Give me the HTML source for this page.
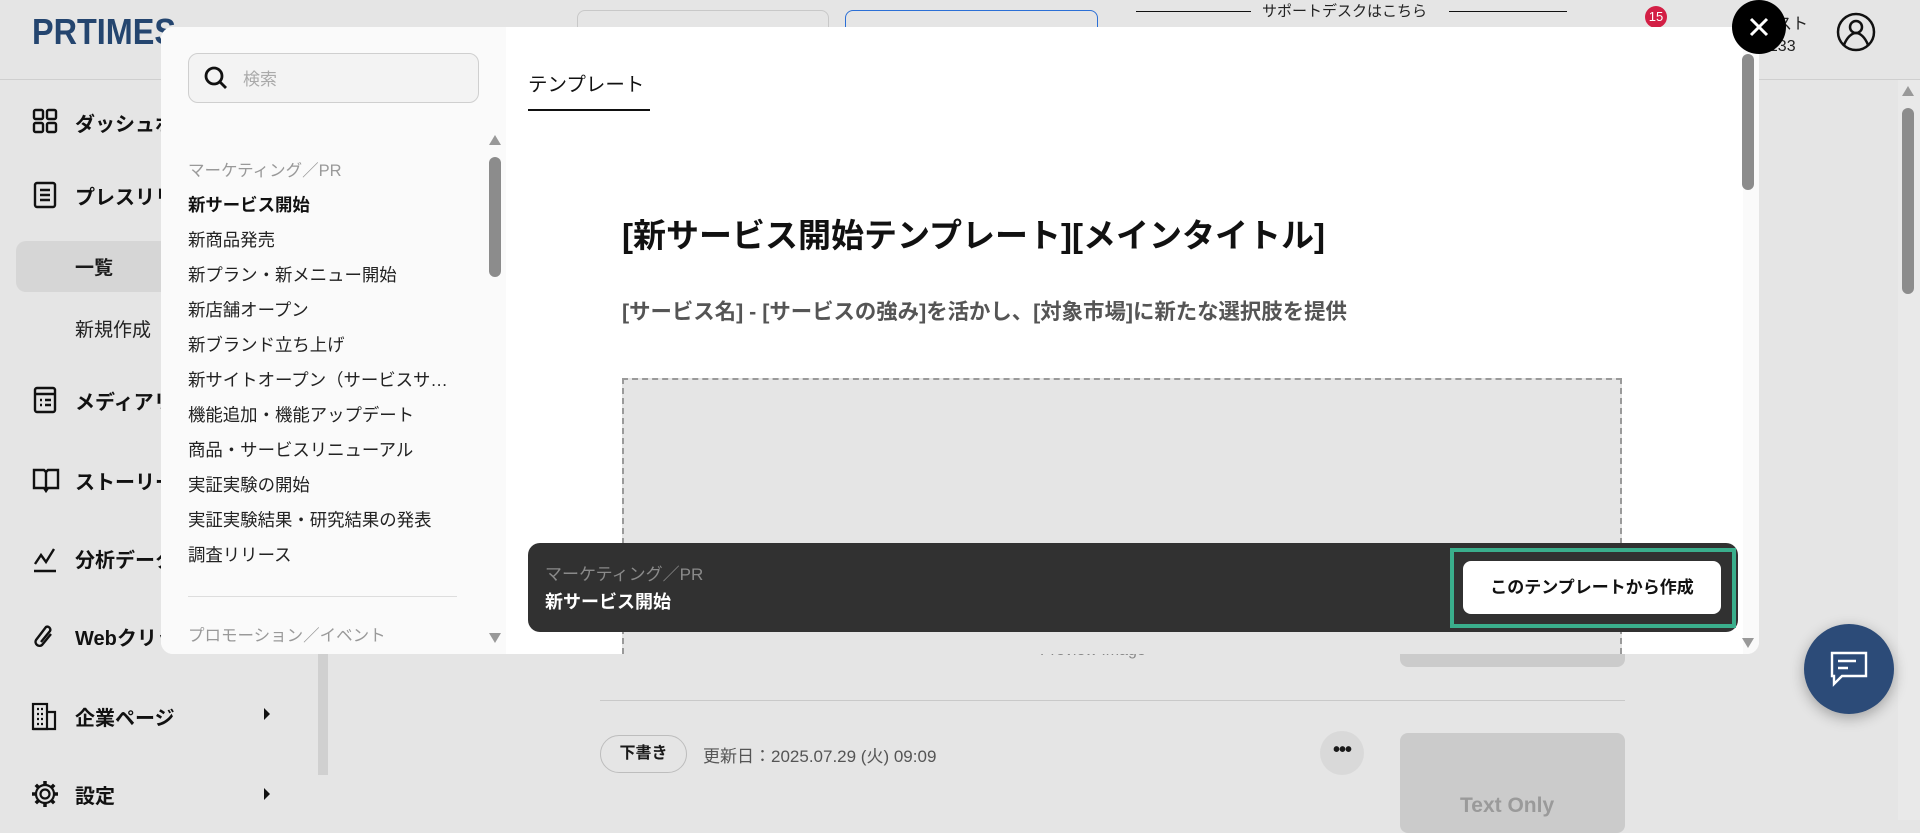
<!DOCTYPE html>
<html><head><meta charset="utf-8"><style>
*{box-sizing:border-box;margin:0;padding:0}
body{width:1920px;height:820px;overflow:hidden;background:#e5e5e5;font-family:"Liberation Sans","Noto Sans CJK JP",sans-serif;position:relative;color:#1a1a1a}
.a{position:absolute}
.side-item{position:absolute;left:45px;font-size:20px;font-weight:bold;color:#111;white-space:nowrap}
.side-item svg{position:absolute;left:-12px;top:0}
.li{position:absolute;left:188px;font-size:17.4px;color:#222;white-space:nowrap}
</style></head><body>
<!-- header -->
<div class="a" style="left:0;top:79px;width:1920px;height:1px;background:#cfcfcf"></div>
<div class="a" style="left:32px;top:11px;font-size:36px;font-weight:900;color:#24456f;letter-spacing:0px;transform:scaleX(0.9);transform-origin:left">PRTIMES</div>
<div class="a" style="left:577px;top:10px;width:252px;height:50px;border:1px solid #c8c8c8;border-radius:8px"></div>
<div class="a" style="left:845px;top:10px;width:253px;height:50px;border:1px solid #2b6fd6;border-radius:8px"></div>
<div class="a" style="left:1136px;top:11px;width:115px;height:1px;background:#111"></div>
<div class="a" style="left:1449px;top:11px;width:118px;height:1px;background:#111"></div>
<div class="a" style="left:1262px;top:0;font-size:15px;color:#222">サポートデスクはこちら</div>
<div class="a" style="left:1645px;top:6px;width:22px;height:22px;border-radius:50%;background:#d31f45;color:#fff;font-size:13px;text-align:center;line-height:22px">15</div>
<div class="a" style="left:1776px;top:10px;font-size:16px;color:#222">スト</div>
<div class="a" style="left:1760px;top:38px;font-size:16px;color:#222">0133</div>
<svg class="a" style="left:1836px;top:12px" width="40" height="40" viewBox="0 0 40 40" fill="none" stroke="#111" stroke-width="2.5"><circle cx="20" cy="20" r="18"/><circle cx="20" cy="15" r="6"/><path d="M8 33c3-8 8-12 12-12s9 4 12 12"/></svg>
<!-- page scrollbar -->
<div class="a" style="left:1898px;top:80px;width:22px;height:740px;background:#e9e9e9"></div>
<div class="a" style="left:1902px;top:86px;width:0;height:0;border-bottom:10px solid #999;border-left:6px solid transparent;border-right:6px solid transparent"></div>
<div class="a" style="left:1902px;top:108px;width:12px;height:186px;border-radius:6px;background:#8c8c8c"></div>
<!-- sidebar -->
<div class="a" style="left:318px;top:80px;width:10px;height:695px;background:#d0d0d0"></div>
<div class="side-item" style="top:108px;left:75px"><svg style="left:-43px;top:0" width="26" height="26" viewBox="0 0 26 26" fill="none" stroke="#111" stroke-width="2.4"><rect x="2" y="2" width="9" height="9" rx="1.5"/><rect x="15" y="2" width="9" height="9" rx="1.5"/><rect x="2" y="15" width="9" height="9" rx="1.5"/><rect x="15" y="15" width="9" height="9" rx="1.5"/></svg>ダッシュボード</div>
<div class="side-item" style="top:181px;left:75px"><svg style="left:-43px;top:0" width="26" height="28" viewBox="0 0 26 28" fill="none" stroke="#111" stroke-width="2.4"><rect x="3" y="2" width="20" height="24" rx="2"/><path d="M8 9h10M8 14h10M8 19h10"/></svg>プレスリリース</div>
<div class="a" style="left:16px;top:241px;width:400px;height:51px;border-radius:10px;background:#d6d6d6"></div>
<div class="a" style="left:75px;top:253px;font-size:19px;font-weight:bold">一覧</div>
<div class="a" style="left:75px;top:315px;font-size:19px;color:#222">新規作成</div>
<div class="side-item" style="top:386px;left:75px"><svg style="left:-43px;top:0" width="26" height="28" viewBox="0 0 26 28" fill="none" stroke="#111" stroke-width="2.4"><rect x="3" y="2" width="20" height="24" rx="2"/><path d="M3 8h20M8 14h2M13 14h6M8 19h2M13 19h6"/></svg>メディアリスト</div>
<div class="side-item" style="top:466px;left:75px"><svg style="left:-43px;top:0" width="28" height="28" viewBox="0 0 28 28" fill="none" stroke="#111" stroke-width="2.4"><path d="M2 4h10l2 2 2-2h10v18H16l-2 3-2-3H2z"/><path d="M14 6v19"/></svg>ストーリー</div>
<div class="side-item" style="top:544px;left:75px"><svg style="left:-43px;top:0" width="26" height="30" viewBox="0 0 26 30" fill="none" stroke="#111" stroke-width="2.4"><path d="M3 20l6-9 5 7 8-13"/><path d="M2 27h22"/></svg>分析データ</div>
<div class="side-item" style="top:622px;left:75px"><svg style="left:-44px;top:0" width="26" height="30" viewBox="0 0 26 30" fill="none" stroke="#111" stroke-width="2.4"><path d="M20 12l-9 11a4 4 0 01-6-5l10-13a3 3 0 014 4l-9 11"/></svg>Webクリッピング</div>
<div class="side-item" style="top:702px;left:75px"><svg style="left:-44px;top:0" width="26" height="30" viewBox="0 0 26 30" fill="none" stroke="#111" stroke-width="2.2"><rect x="2" y="2" width="14" height="25"/><path d="M16 10h8v17H2M6 7h2M10 7h2M6 12h2M10 12h2M6 17h2M10 17h2M6 22h2M10 22h2"/></svg>企業ページ</div>
<div class="a" style="left:264px;top:708px;width:0;height:0;border-left:6px solid #111;border-top:6px solid transparent;border-bottom:6px solid transparent"></div>
<div class="side-item" style="top:780px;left:75px"><svg style="left:-44px;top:0" width="28" height="28" viewBox="0 0 28 28" fill="none" stroke="#111" stroke-width="2.2"><circle cx="14" cy="14" r="4.5"/><circle cx="14" cy="14" r="9"/><path d="M14 1v4M14 23v4M1 14h4M23 14h4M4.8 4.8l2.8 2.8M20.4 20.4l2.8 2.8M4.8 23.2l2.8-2.8M20.4 7.6l2.8-2.8" stroke-width="3.5"/></svg>設定</div>
<div class="a" style="left:264px;top:788px;width:0;height:0;border-left:6px solid #111;border-top:6px solid transparent;border-bottom:6px solid transparent"></div>
<!-- main content behind -->
<div class="a" style="left:1400px;top:620px;width:225px;height:47px;border-radius:0 0 8px 8px;background:#cbcbcb"></div>
<div class="a" style="left:1040px;top:642px;font-size:16px;color:#888">Preview Image</div>
<div class="a" style="left:600px;top:700px;width:1025px;height:1px;background:#c9c9c9"></div>
<div class="a" style="left:600px;top:735px;width:87px;height:38px;border:1px solid #bdbdbd;border-radius:19px;font-size:16px;font-weight:bold;text-align:center;line-height:36px">下書き</div>
<div class="a" style="left:703px;top:742px;font-size:17px;color:#555">更新日：2025.07.29 (火) 09:09</div>
<div class="a" style="left:1320px;top:731px;width:44px;height:44px;border-radius:50%;background:#d9d9d9;text-align:center;line-height:38px;font-size:20px;font-weight:bold;letter-spacing:-1px">•••</div>
<div class="a" style="left:1400px;top:733px;width:225px;height:100px;border-radius:8px;background:#cbcbcb"></div>
<div class="a" style="left:1460px;top:794px;font-size:21px;font-weight:bold;color:#9a9a9a">Text Only</div>
<!-- chat button -->
<div class="a" style="left:1804px;top:624px;width:90px;height:90px;border-radius:50%;background:#2c4b78;box-shadow:0 4px 14px rgba(0,0,0,.3)"></div>
<svg class="a" style="left:1828px;top:648px" width="42" height="42" viewBox="0 0 42 42" fill="none" stroke="#fff" stroke-width="2.4"><path d="M4 5h34v23H14l-8 8v-8H4z"/><path d="M10 13h18M10 20h10"/></svg>
<!-- modal -->
<div class="a" style="left:161px;top:27px;width:1598px;height:627px;border-radius:12px;background:#fff;overflow:hidden">
  <div class="a" style="left:0;top:0;width:345px;height:627px;background:#fafafa"></div>
  <div class="a" style="left:1582px;top:0;width:16px;height:627px;background:#fafafa"></div>
</div>
<div class="a" style="left:188px;top:53px;width:291px;height:50px;border:1px solid #cfcfcf;border-radius:10px;background:#f3f3f3"></div>
<svg class="a" style="left:203px;top:65px" width="26" height="26" viewBox="0 0 26 26" fill="none" stroke="#111" stroke-width="2.8"><circle cx="11" cy="11" r="8"/><path d="M17 17l6 6"/></svg>
<div class="a" style="left:243px;top:65px;font-size:17px;color:#aaa">検索</div>
<!-- left scrollbar -->
<div class="a" style="left:489px;top:135px;width:0;height:0;border-bottom:10px solid #999;border-left:6px solid transparent;border-right:6px solid transparent"></div>
<div class="a" style="left:489px;top:157px;width:12px;height:120px;border-radius:6px;background:#8c8c8c"></div>
<div class="a" style="left:489px;top:633px;width:0;height:0;border-top:10px solid #999;border-left:6px solid transparent;border-right:6px solid transparent"></div>
<div class="li" style="top:157px;font-size:16.5px;color:#999">マーケティング／PR</div>
<div class="li" style="top:192px;font-weight:bold;color:#111">新サービス開始</div>
<div class="li" style="top:227px">新商品発売</div>
<div class="li" style="top:262px">新プラン・新メニュー開始</div>
<div class="li" style="top:297px">新店舗オープン</div>
<div class="li" style="top:332px">新ブランド立ち上げ</div>
<div class="li" style="top:367px">新サイトオープン（サービスサ…</div>
<div class="li" style="top:402px">機能追加・機能アップデート</div>
<div class="li" style="top:437px">商品・サービスリニューアル</div>
<div class="li" style="top:472px">実証実験の開始</div>
<div class="li" style="top:507px">実証実験結果・研究結果の発表</div>
<div class="li" style="top:542px">調査リリース</div>
<div class="a" style="left:188px;top:596px;width:269px;height:1px;background:#ddd"></div>
<div class="li" style="top:622px;font-size:16.5px;color:#999">プロモーション／イベント</div>
<!-- right content -->
<div class="a" style="left:528px;top:68px;font-size:19.5px;color:#111">テンプレート</div>
<div class="a" style="left:528px;top:109px;width:122px;height:2px;background:#111"></div>
<div class="a" style="left:622px;top:209px;font-size:33px;font-weight:bold;color:#111">[新サービス開始テンプレート][メインタイトル]</div>
<div class="a" style="left:622px;top:295px;font-size:21.4px;font-weight:bold;color:#555">[サービス名] - [サービスの強み]を活かし、[対象市場]に新たな選択肢を提供</div>
<div class="a" style="left:622px;top:378px;width:1000px;height:276px;border:2px dashed #9a9a9a;border-bottom:none;background:#e5e5e5"></div>
<div class="a" style="left:1742px;top:54px;width:12px;height:136px;border-radius:6px;background:#8c8c8c"></div>
<div class="a" style="left:1742px;top:638px;width:0;height:0;border-top:10px solid #999;border-left:6px solid transparent;border-right:6px solid transparent"></div>
<!-- dark bar -->
<div class="a" style="left:528px;top:543px;width:1210px;height:89px;border-radius:12px;background:#313131"></div>
<div class="a" style="left:545px;top:560px;font-size:17px;color:#8a8a8a">マーケティング／PR</div>
<div class="a" style="left:545px;top:588px;font-size:18px;font-weight:bold;color:#fff">新サービス開始</div>
<div class="a" style="left:1450px;top:548px;width:286px;height:80px;border:4px solid #3aae8c"></div>
<div class="a" style="left:1463px;top:561px;width:258px;height:53px;border-radius:8px;background:#fff;font-size:17px;font-weight:bold;color:#111;text-align:center;line-height:53px">このテンプレートから作成</div>
<!-- close -->
<div class="a" style="left:1732px;top:0;width:54px;height:54px;border-radius:50%;background:#000"></div>
<svg class="a" style="left:1748px;top:16px" width="22" height="22" viewBox="0 0 22 22" stroke="#fff" stroke-width="3"><path d="M3 3l16 16M19 3L3 19"/></svg>
</body></html>
